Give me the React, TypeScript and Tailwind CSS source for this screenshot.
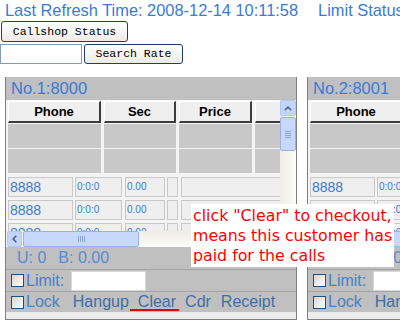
import React from "react";

const headCell =
  "h-[22px] shrink-0 bg-[#efefef] border-t border-l border-t-white border-l-white border-r-2 border-b-2 border-r-[#3c3c3c] border-b-[#3c3c3c] flex items-center justify-center text-[13px] font-bold text-black font-['Liberation_Sans',Arial,sans-serif]";
const grayCell = "h-[24px] shrink-0 bg-[#c8c8c8]";
const dataCell = "h-[20px] shrink-0 bg-[#efefef] border border-[#c8c8c8]";

function Checkbox() {
  return (
    <div className="w-[13px] h-[13px] shrink-0 border border-[#1c5180] bg-gradient-to-br from-[#d6d6ce] to-white" />
  );
}

function VScroll() {
  return (
    <div className="w-[16px] h-[131px] shrink-0 flex flex-col bg-gradient-to-r from-[#eeede5] to-[#fcfcf9]">
      <div className="h-[16px] rounded-[2px] border border-[#b4c8f4] bg-[#c4d5fc] flex items-center justify-center">
        <svg width="8" height="5" viewBox="0 0 8 5">
          <path d="M0.8 4.3 L4 1.2 L7.2 4.3" fill="none" stroke="#4d6185" strokeWidth="1.6" />
        </svg>
      </div>
      <div className="h-[34px] mt-[1px] rounded-[2px] border border-[#98b1e8] bg-[#c8d8fd] flex flex-col items-center justify-center gap-[1px]">
        {[0, 1, 2, 3].map((i) => (
          <div key={i} className="w-[6px] h-[1px] bg-[#8aa4dc]" />
        ))}
      </div>
    </div>
  );
}

function HScroll() {
  return (
    <div className="flex h-[16px]">
      <div className="w-[274px] h-[16px] flex pl-[1px] bg-gradient-to-b from-[#eeede5] to-[#fcfcf9]">
        <div className="w-[15px] rounded-[2px] border border-[#b4c8f4] bg-[#c4d5fc] flex items-center justify-center">
          <svg width="5" height="8" viewBox="0 0 5 8">
            <path d="M4.3 0.8 L1.2 4 L4.3 7.2" fill="none" stroke="#4d6185" strokeWidth="1.6" />
          </svg>
        </div>
        <div className="w-[116px] ml-[1px] rounded-[2px] border border-[#98b1e8] bg-[#c8d8fd] flex items-center justify-center gap-[1px]">
          {[0, 1, 2, 3].map((i) => (
            <div key={i} className="w-[1px] h-[6px] bg-[#8aa4dc]" />
          ))}
        </div>
      </div>
      <div className="w-[16px] h-[16px] bg-[#ece9d8]" />
    </div>
  );
}

function DataRow({ first }: { first?: boolean }) {
  return (
    <div className={`flex pl-[2px] text-[#3b7ad6] font-['Liberation_Sans',Arial,sans-serif] ${first ? "mt-[4px]" : "mt-[3px]"}`}>
      <div className={`${dataCell} w-[65px] pl-[1px] text-[14px] leading-[18px]`}>8888</div>
      <div className={`${dataCell} w-[47px] ml-[2px] pl-[1px] text-[10px] leading-[18px]`}>0:0:0</div>
      <div className={`${dataCell} w-[40px] ml-[3px] pl-[1px] text-[10px] leading-[18px]`}>0.00</div>
      <div className={`${dataCell} w-[11px] ml-[2px]`} />
      <div className={`${dataCell} w-[110px] ml-[3px]`} />
    </div>
  );
}

function Panel({ title }: { title: string }) {
  return (
    <div className="w-[292px] shrink-0 border-x border-b border-[#808080] bg-[#c0c0c0] font-['Liberation_Sans',Arial,sans-serif]">
      <div className="h-[23px] pl-[5px] text-[16.5px] leading-[23px] text-[#3b7ad6]">{title}</div>
      <div className="flex">
        <div className="w-[274px] h-[131px] overflow-hidden bg-[#f4f4f4]">
          <div className="flex gap-[3px] pl-[2px] pt-[1px]">
            <div className={`${headCell} w-[93px]`}>Phone</div>
            <div className={`${headCell} w-[72px]`}>Sec</div>
            <div className={`${headCell} w-[73px]`}>Price</div>
            <div className={`${headCell} w-[60px]`} />
          </div>
          {[0, 1].map((i) => (
            <div key={i} className="flex gap-[3px] pl-[2px] mt-[1px]">
              <div className={`${grayCell} w-[93px]`} />
              <div className={`${grayCell} w-[72px]`} />
              <div className={`${grayCell} w-[73px]`} />
              <div className={`${grayCell} w-[60px]`} />
            </div>
          ))}
          <DataRow first />
          <DataRow />
          <DataRow />
        </div>
        <VScroll />
      </div>
      <HScroll />
      <div className="h-[22px] pl-[11px] flex items-center text-[16px] text-[#5a8ad0]">
        <span>U: 0</span>
        <span className="ml-[12px]">B: 0.00</span>
      </div>
      <div className="h-[22px] border-t border-[#a4a4a4] pl-[5px] flex items-center">
        <Checkbox />
        <span className="ml-[2px] text-[16px] text-[#4d7fc4]">Limit:</span>
        <div className="ml-[7px] w-[75px] h-[20px] bg-white border border-[#d8d8d8]" />
      </div>
      <div className="h-[21px] border-t border-[#a4a4a4] pl-[5px] flex items-center text-[16px]">
        <Checkbox />
        <span className="ml-[2px] text-[#4d7fc4]">Lock</span>
        <span className="ml-[13px] text-[#3e6ea8]">Hangup</span>
        <span className="ml-[9px] text-[#3e6ea8]">Clear</span>
        <span className="ml-[9px] text-[#3e6ea8]">Cdr</span>
        <span className="ml-[10px] text-[#3e6ea8]">Receipt</span>
      </div>
      <div className="h-[7px] bg-[#ececec]" />
    </div>
  );
}

export default function App() {
  return (
    <div className="relative w-[400px] h-[328px] overflow-hidden bg-white">
      <div className="h-[21px] pl-[5px] whitespace-nowrap text-[16.4px] leading-[21px] text-[#3b7ad6] font-['Liberation_Sans',Arial,sans-serif]">
        Last Refresh Time: 2008-12-14 10:11:58
        <span className="ml-[20px]">Limit Status</span>
      </div>
      <div className="flex h-[21px]">
        <button className="ml-[1px] h-[21px] w-[127px] rounded-[3px] border border-[#1d3f6e] bg-gradient-to-b from-white to-[#ecebe6] text-[11.5px] text-black font-['Liberation_Mono',monospace]">
          Callshop Status
        </button>
      </div>
      <div className="flex items-center mt-[2px] h-[20px]">
        <input className="w-[82px] h-[20px] border border-[#7f9db9] bg-white outline-none" />
        <button className="ml-[2px] h-[20px] w-[99px] rounded-[3px] border border-[#1d3f6e] bg-gradient-to-b from-white to-[#ecebe6] text-[11.5px] text-black font-['Liberation_Mono',monospace]">
          Search Rate
        </button>
      </div>
      <div className="flex gap-[10px] ml-[5px] mt-[13px]">
        <Panel title="No.1:8000" />
        <Panel title="No.2:8001" />
      </div>
      <div className="absolute left-[191px] top-[204px] w-[203px] h-[63px] bg-white px-[2px] pt-[2px] text-[15.8px] leading-[20px] text-[#ff0000] font-['DejaVu_Sans',Verdana,sans-serif] whitespace-nowrap">
        click "Clear" to checkout,
        <br />
        means this customer has
        <br />
        paid for the calls
      </div>
      <div className="absolute left-[130px] top-[309px] w-[49px] h-[2px] bg-[#e00000]" />
    </div>
  );
}
